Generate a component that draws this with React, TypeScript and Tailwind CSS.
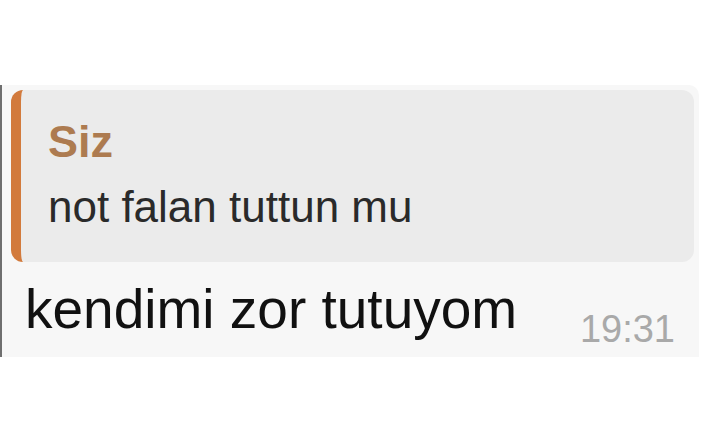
import React from 'react';

export default function App() {
  return (
    <div
      className="w-[701px] h-[443px] bg-white pt-[85px] overflow-hidden"
      style={{ fontFamily: '"Liberation Sans", Arial, sans-serif' }}
    >
      <div className="w-[699px] h-[272px] bg-[#f7f7f7] border-l-[2px] border-[#6f6f6f] rounded-tr-[10px] flex flex-col">
        <div className="ml-[9px] mt-[5px] w-[683px] h-[172px] bg-[#ebebeb] rounded-[12px] border-l-[10px] border-[#d27a3c] pl-[27px] pt-[29px] flex flex-col">
          <span className="text-[45px] leading-none font-semibold text-[#ad7b50]">Siz</span>
          <span className="mt-[21px] text-[44px] leading-none text-[#2a2a2a]">not falan tuttun mu</span>
        </div>
        <div className="flex items-start pl-[23px] pr-[24px] mt-[20px]">
          <span className="text-[55px] leading-none text-[#111111]">kendimi zor tutuyom</span>
          <span className="ml-auto mt-[28px] text-[38px] leading-none text-[#a9a9a9]">19:31</span>
        </div>
      </div>
    </div>
  );
}
